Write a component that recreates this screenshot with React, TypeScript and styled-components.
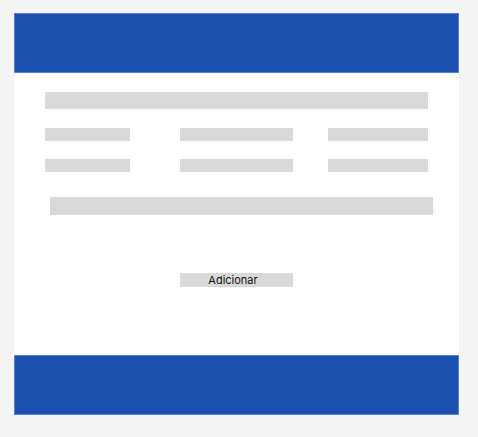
import React from "react";
import styled, { createGlobalStyle } from "styled-components";

const Global = createGlobalStyle`
  html, body { margin: 0; padding: 0; background: #f4f4f4; }
  body { font-family: Inter, "Liberation Sans", sans-serif; }
`;

const Page = styled.div`
  padding: 13px 0 0 14px;
  width: 478px;
  height: 437px;
  box-sizing: border-box;
`;

const Card = styled.div`
  width: 445px;
  height: 402px;
  background: #ffffff;
  display: flex;
  flex-direction: column;
`;

const Band = styled.div`
  height: 60px;
  flex: 0 0 auto;
  background: #1c4fb0;
  box-shadow: inset 0 0 0 1px #5b82d0;
`;

const Body = styled.div`
  flex: 1;
  display: flex;
  flex-direction: column;
  padding: 19px 31px 0 31px;
`;

const Bar = styled.div<{ $h: number; $shift?: number }>`
  height: ${(p) => p.$h}px;
  width: 383px;
  background: #d9d9d9;
  margin-left: ${(p) => p.$shift ?? 0}px;
`;

const Grid = styled.div`
  display: grid;
  grid-template-columns: 135px 148px 100px;
  row-gap: 18px;
  margin-top: 19px;
`;

const Field = styled.div<{ $w: number }>`
  width: ${(p) => p.$w}px;
  height: 13px;
  background: #d9d9d9;
`;

const Button = styled.button`
  align-self: center;
  margin-top: 58px;
  width: 113px;
  height: 14px;
  border: none;
  padding: 0 7px 0 0;
  background: #d9d9d9;
  color: #111;
  font-family: Inter, "Liberation Sans", sans-serif;
  font-size: 11px;
  line-height: 14px;
`;

export default function App() {
  const widths = [85, 113, 100];
  return (
    <>
      <Global />
      <Page>
        <Card>
          <Band />
          <Body>
            <Bar $h={17} />
            <Grid>
              {[0, 1].map((r) =>
                widths.map((w, i) => <Field key={`${r}-${i}`} $w={w} />)
              )}
            </Grid>
            <Bar $h={18} $shift={5} style={{ marginTop: 25 }} />
            <Button>Adicionar</Button>
          </Body>
          <Band />
        </Card>
      </Page>
    </>
  );
}
